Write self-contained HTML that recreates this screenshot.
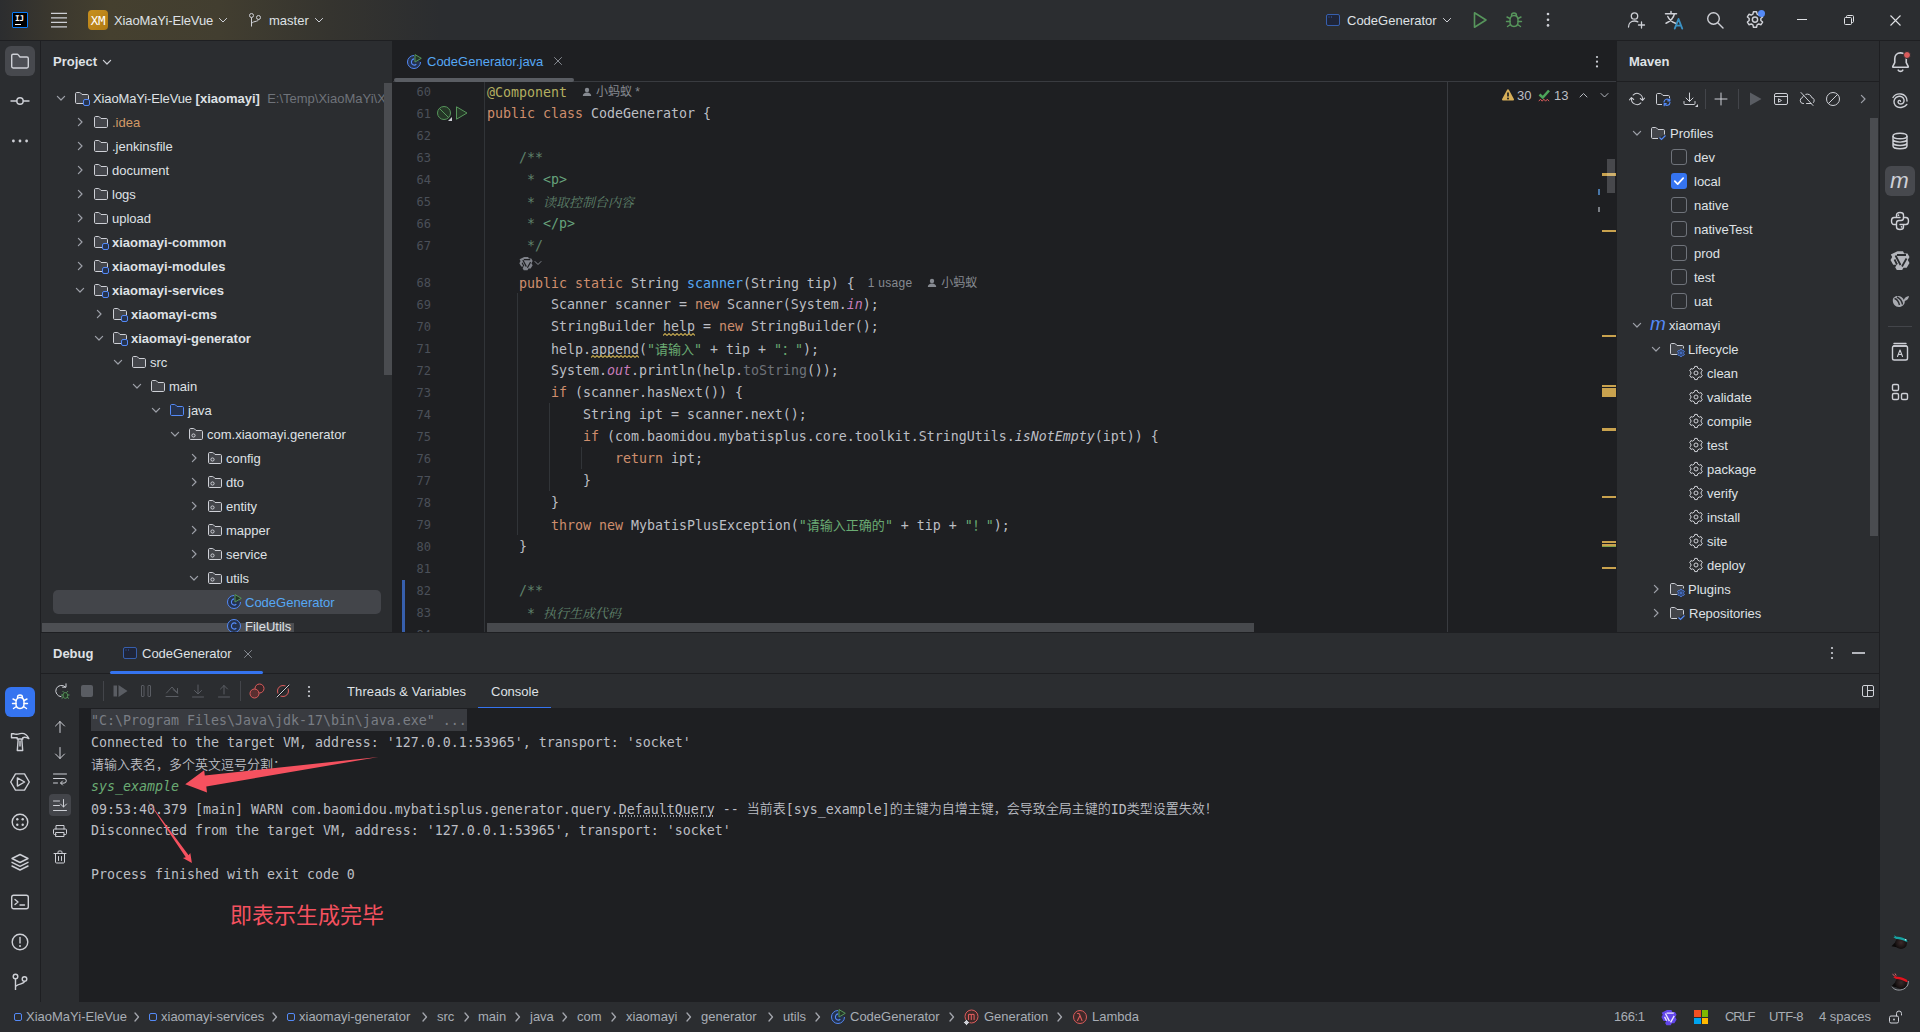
<!DOCTYPE html>
<html lang="zh"><head><meta charset="utf-8"><title>XiaoMaYi-EleVue – CodeGenerator.java</title>
<style>
*{box-sizing:border-box;margin:0;padding:0}
html,body{width:1920px;height:1032px;overflow:hidden;background:#2B2D30}
body{font-family:"Liberation Sans","Noto Sans CJK SC",sans-serif;font-size:13px;color:#DFE1E5;position:relative;-webkit-font-smoothing:antialiased}
.abs{position:absolute}
.t{position:absolute;white-space:pre;line-height:20px;height:20px;padding-top:1px}
.b{font-weight:700}
svg{display:block;position:absolute}
.ic{position:absolute;width:16px;height:16px}
.ic svg{position:absolute;left:0;top:0}
#title{position:absolute;left:0;top:0;width:1920px;height:40px;background:linear-gradient(90deg,#2C2D2F 0px,#3A372E 50px,#45402F 110px,#423E30 220px,#35342F 330px,#2B2D30 440px)}
#lstripe{position:absolute;left:0;top:41px;width:40px;height:961px;background:#2B2D30}
#rstripe{position:absolute;left:1880px;top:41px;width:40px;height:961px;background:#2B2D30}
#project{position:absolute;left:41px;top:41px;width:352px;height:591px;background:#2B2D30;overflow:hidden}
#editor{position:absolute;left:393px;top:40px;width:1223px;height:592px;background:#1E1F22;overflow:hidden}
#maven{position:absolute;left:1617px;top:41px;width:262px;height:591px;background:#2B2D30;overflow:hidden}
#debug{position:absolute;left:41px;top:633px;width:1838px;height:369px;background:#2B2D30;overflow:hidden}
#status{position:absolute;left:0;top:1002px;width:1920px;height:30px;background:#2B2D30;color:#A8ADB5}
.line{position:absolute;background:#1E1F22}
.row{position:absolute;left:0;height:24px;width:100%}
.row .t{top:2px}
.code{position:absolute;font-family:"DejaVu Sans Mono","Liberation Mono","Noto Sans CJK SC",monospace;font-size:13.29px;line-height:22px;height:22px;padding-top:1px;white-space:pre;color:#BCBEC4;letter-spacing:0}
.ln{position:absolute;font-family:"DejaVu Sans Mono","Liberation Mono","Noto Sans CJK SC",monospace;font-size:12px;line-height:22px;height:22px;color:#4B5059;text-align:right;width:40px;padding-top:1px}
.k{color:#CF8E6D}.s{color:#6AAB73}.an{color:#B3AE60}.m{color:#56A8F5}.f{color:#C77DBB;font-style:italic}.i{font-style:italic}
.d{color:#5F826B}.dt{color:#67A37C}.g{color:#6F737A}
.cj{font-family:"Noto Sans CJK SC",sans-serif;font-size:13px}
.cc{font-family:"Noto Sans CJK SC",sans-serif;font-size:13px;font-weight:350;position:relative;top:-1px}
.cji{font-family:"Noto Serif CJK SC",serif;font-size:13px;font-style:italic}
.hint{font-family:"Liberation Sans","Noto Sans CJK SC",sans-serif;font-size:12px;color:#868A91;position:relative;top:-1px}
.wav{}
.con{position:absolute;font-family:"DejaVu Sans Mono","Liberation Mono","Noto Sans CJK SC",monospace;font-size:13.29px;line-height:22px;height:22px;white-space:pre;color:#BCBEC4;padding-top:1px}
.sb{position:absolute;top:5px;line-height:20px;white-space:pre;color:#A8ADB5}
</style></head><body>
<div id="title"><div class="abs" style="left:12px;top:12px;width:16px;height:16px;background:#000;border:1.500px solid #087CFA;border-radius:1px"></div><div class="t b" style="left:15px;top:13.500px;padding:0;font-size:7.800px;line-height:9px;height:9px;color:#fff;font-family:'DejaVu Sans Mono','Liberation Mono','Noto Sans CJK SC',monospace;letter-spacing:-.4px">IJ</div><div class="abs" style="left:15px;top:24px;width:6px;height:1px;background:#fff"></div><svg width="18" height="16" viewBox="0 0 18 16" fill="none" style="left:50px;top:12px"><path d="M1 1.300h16M1 5.850h16M1 10.400h16M1 14.950h16" stroke="#CED0D6" stroke-width="1.300"/></svg><div class="abs" style="left:88px;top:10px;width:20px;height:20px;border-radius:4px;background:linear-gradient(135deg,#C8901F,#B07A14)"></div><div class="t" style="left:88px;top:10px;width:20px;text-align:center;font-size:12.500px;color:#fff;font-family:'DejaVu Sans Mono','Liberation Mono','Noto Sans CJK SC',monospace;letter-spacing:-.2px">XM</div><div class="t" style="left:114px;top:10px;letter-spacing:-.12px">XiaoMaYi-EleVue</div><svg width="16" height="16" viewBox="0 0 16 16" fill="none" style="left:215px;top:12px"><path d="M4.400 6.400l3.600 3.600 3.600-3.600" stroke="#CED0D6" stroke-linecap="round" stroke-linejoin="round"/></svg><svg width="16" height="16" viewBox="0 0 16 16" fill="none" style="left:247px;top:12px"><circle cx="4.500" cy="3.500" r="2" stroke="#CED0D6"/><circle cx="11.500" cy="5.500" r="2" stroke="#CED0D6"/><path d="M4.500 5.500v9M11.500 7.500c0 2.500-7 1.500-7 4.500" stroke="#CED0D6"/></svg><div class="t" style="left:269px;top:10px">master</div><svg width="16" height="16" viewBox="0 0 16 16" fill="none" style="left:311px;top:12px"><path d="M4.400 6.400l3.600 3.600 3.600-3.600" stroke="#CED0D6" stroke-linecap="round" stroke-linejoin="round"/></svg><div class="ic" style="left:1325px;top:12px"><svg width="16" height="16" viewBox="0 0 16 16" fill="none" style=""><rect x="1.500" y="2.500" width="13" height="11" rx="1.500" stroke="#375FAD" fill="#1F2538"/><path d="M3.500 5h1M6 5h1" stroke="#375FAD"/></svg></div><div class="t" style="left:1347px;top:10px">CodeGenerator</div><svg width="16" height="16" viewBox="0 0 16 16" fill="none" style="left:1439px;top:12px"><path d="M4.400 6.400l3.600 3.600 3.600-3.600" stroke="#CED0D6" stroke-linecap="round" stroke-linejoin="round"/></svg><svg width="20" height="20" viewBox="0 0 20 20" fill="none" style="left:1470px;top:10px"><path d="M4.500 2.800v14.400l11.500-7.200z" stroke="#57965C" stroke-width="1.600" stroke-linejoin="round"/></svg><svg width="20" height="20" viewBox="0 0 20 20" fill="none" style="left:1504px;top:10px"><path d="M10 5.500c2.500 0 4 2 4 4.500v2c0 2.500-1.500 4.500-4 4.500s-4-2-4-4.500v-2c0-2.500 1.500-4.500 4-4.500z" stroke="#57965C" stroke-width="1.400"/><path d="M7.500 5.500c0-1.500 1-2.500 2.500-2.500s2.500 1 2.500 2.500M6 8.500l-3-1.500M14 8.500l3-1.500M6 11.500H2.500M14 11.500h3.500M6.500 14.500l-3 2M13.500 14.500l3 2" stroke="#57965C" stroke-width="1.400" stroke-linecap="round"/></svg><svg width="4" height="15.4" viewBox="0 0 4 15.4" fill="none" style="left:1546px;top:12.3px"><circle cx="2" cy="2.0" r="1.3" fill="#CED0D6"/><circle cx="2" cy="7.7" r="1.3" fill="#CED0D6"/><circle cx="2" cy="13.4" r="1.3" fill="#CED0D6"/></svg><svg width="20" height="20" viewBox="0 0 20 20" fill="none" style="left:1626px;top:10px"><circle cx="8.500" cy="6" r="3.200" stroke="#CED0D6" stroke-width="1.300"/><path d="M2.500 17c0-3.500 2.500-6 6-6 1.300 0 2.400.3 3.300.9M15.500 12v6M12.500 15h6" stroke="#CED0D6" stroke-width="1.300" stroke-linecap="round"/></svg><svg width="20" height="20" viewBox="0 0 20 20" fill="none" style="left:1664px;top:10px"><path d="M1.500 3.800h11M7 1.500v2.300M10.500 3.800c-1 4-4 7.500-8.500 9.500M3.800 6.500c1.200 2.800 4 5.500 7.700 6.800" stroke="#CED0D6" stroke-width="1.500" stroke-linecap="round"/><path d="M10.800 18.500l3.700-9.500 3.700 9.500M12 15.600h5" stroke="#3B92C4" stroke-width="1.900" stroke-linecap="round" stroke-linejoin="round"/></svg><svg width="20" height="20" viewBox="0 0 20 20" fill="none" style="left:1705px;top:10px"><circle cx="8.500" cy="8.500" r="5.800" stroke="#CED0D6" stroke-width="1.400"/><path d="M13 13l5 5" stroke="#CED0D6" stroke-width="1.400" stroke-linecap="round"/></svg><svg width="22" height="22" viewBox="0 0 20 20" fill="none" style="left:1744px;top:9px"><path d="M8.600 2.500h2.800l.5 2.100 1.500.9 2.100-.7 1.400 2.400-1.600 1.500v1.700l1.600 1.500-1.400 2.400-2.100-.7-1.500.9-.5 2.100H8.600l-.5-2.100-1.500-.9-2.100.7-1.400-2.400 1.600-1.500V8.700L3.100 7.200l1.400-2.400 2.100.7 1.500-.9z" stroke="#CED0D6" stroke-width="1.300" stroke-linejoin="round"/><circle cx="10" cy="9.600" r="2.400" stroke="#CED0D6" stroke-width="1.300"/></svg><div class="abs" style="left:1758px;top:10px;width:7px;height:7px;border-radius:50%;background:#548AF7"></div><div class="abs" style="left:1797px;top:19px;width:10px;height:1px;background:#DFE1E5"></div><svg width="10" height="10" viewBox="0 0 10 10" fill="none" style="left:1844px;top:15px"><rect x=".5" y="2.500" width="7" height="7" rx="1" stroke="#DFE1E5"/><path d="M2.500 2.500v-1c0-.6.4-1 1-1h5c.6 0 1 .4 1 1v5c0 .6-.4 1-1 1h-1" stroke="#DFE1E5"/></svg><svg width="11" height="11" viewBox="0 0 11 11" fill="none" style="left:1890px;top:15px"><path d="M.5.500l10 10M10.500.500l-10 10" stroke="#DFE1E5" stroke-width="1.100"/></svg></div><div class="line" style="left:0;top:40px;width:1920px;height:1px"></div><div class="line" style="left:40px;top:41px;width:1px;height:961px"></div><div id="lstripe"><div class="abs" style="left:5px;top:5px;width:30px;height:30px;border-radius:6px;background:#47494E"></div><svg width="20" height="20" viewBox="0 0 20 20" fill="none" style="left:10px;top:10px"><path d="M1.700 4.600c0-.8.600-1.400 1.400-1.400h4c.4 0 .8.200 1 .5l1.900 2.300h6.900c.8 0 1.400.6 1.400 1.400v8.200c0 .8-.6 1.400-1.400 1.400H3.100c-.8 0-1.400-.6-1.400-1.400z" stroke="#CED0D6" stroke-width="1.400" fill="#5A5D63" fill-opacity=".35"/></svg><svg width="20" height="20" viewBox="0 0 20 20" fill="none" style="left:10px;top:50px"><circle cx="10" cy="10" r="3.200" stroke="#CED0D6" stroke-width="1.400"/><path d="M1 10h5.800M13.200 10H19" stroke="#CED0D6" stroke-width="1.400" stroke-linecap="round"/></svg><svg width="20" height="4" viewBox="0 0 20 4" fill="none" style="left:10px;top:98px"><circle cx="3.4" cy="2" r="1.400" fill="#CED0D6"/><circle cx="10.0" cy="2" r="1.400" fill="#CED0D6"/><circle cx="16.599999999999998" cy="2" r="1.400" fill="#CED0D6"/></svg><div class="abs" style="left:5px;top:646px;width:30px;height:30px;border-radius:6px;background:#3574F0"></div><svg width="20" height="20" viewBox="0 0 20 20" fill="none" style="left:10px;top:651px"><path d="M10 5.500c2.500 0 4 2 4 4.500v2c0 2.500-1.500 4.500-4 4.500s-4-2-4-4.500v-2c0-2.500 1.500-4.500 4-4.500z" stroke="#fff" stroke-width="1.400"/><path d="M7.500 5.500c0-1.500 1-2.500 2.500-2.500s2.500 1 2.500 2.500M6 8.500l-3-1.500M14 8.500l3-1.500M6 11.500H2.500M14 11.500h3.500M6.500 14.500l-3 2M13.500 14.500l3 2" stroke="#fff" stroke-width="1.400" stroke-linecap="round"/></svg><svg width="20" height="20" viewBox="0 0 20 20" fill="none" style="left:10px;top:691px"><path d="M1.500 1.800H4c2 .8 4 .4 6-.2 3.500-.8 7 .9 8.800 5-2.300-1.400-4.300-1.800-6-1V7H7.200V5.800H1.500z" stroke="#CED0D6" stroke-width="1.400" stroke-linejoin="round"/><path d="M8.200 7L7.300 18.500h5.400L11.800 7M10 8.500v6" stroke="#CED0D6" stroke-width="1.400" stroke-linejoin="round"/></svg><svg width="20" height="20" viewBox="0 0 20 20" fill="none" style="left:10px;top:731px"><path d="M5.500 1.900h9l4.800 8.100-4.800 8.100h-9L.7 10z" stroke="#CED0D6" stroke-width="1.400" stroke-linejoin="round"/><path d="M7.400 5.900v8.200l7.200-4.100z" stroke="#CED0D6" stroke-width="1.400" stroke-linejoin="round"/></svg><svg width="20" height="20" viewBox="0 0 20 20" fill="none" style="left:10px;top:771px"><circle cx="10" cy="10" r="7.800" stroke="#CED0D6" stroke-width="1.400"/><circle cx="7.3" cy="7.3" r="1.200" fill="#CED0D6"/><circle cx="12.7" cy="7.3" r="1.200" fill="#CED0D6"/><circle cx="7.3" cy="12.7" r="1.200" fill="#CED0D6"/><circle cx="12.7" cy="12.7" r="1.200" fill="#CED0D6"/></svg><svg width="20" height="20" viewBox="0 0 20 20" fill="none" style="left:10px;top:811px"><path d="M10 2.500l8 4-8 4-8-4z" stroke="#CED0D6" stroke-width="1.400" stroke-linejoin="round"/><path d="M2 10.300l8 4 8-4M2 14l8 4 8-4" stroke="#CED0D6" stroke-width="1.400" stroke-linejoin="round" stroke-linecap="round"/></svg><svg width="20" height="20" viewBox="0 0 20 20" fill="none" style="left:10px;top:851px"><rect x="1.700" y="3.200" width="16.600" height="13.600" rx="2" stroke="#CED0D6" stroke-width="1.400"/><path d="M5 7.500l3 2.500-3 2.500M10 13h4.500" stroke="#CED0D6" stroke-width="1.400" stroke-linecap="round" stroke-linejoin="round"/></svg><svg width="20" height="20" viewBox="0 0 20 20" fill="none" style="left:10px;top:891px"><circle cx="10" cy="10" r="7.800" stroke="#CED0D6" stroke-width="1.400"/><path d="M10 5.500v5.500" stroke="#CED0D6" stroke-width="1.400" stroke-linecap="round"/><circle cx="10" cy="14" r="1" fill="#CED0D6"/></svg><svg width="20" height="20" viewBox="0 0 20 20" fill="none" style="left:10px;top:931px"><circle cx="5.500" cy="4.500" r="2.300" stroke="#CED0D6" stroke-width="1.400"/><circle cx="14.500" cy="7" r="2.300" stroke="#CED0D6" stroke-width="1.400"/><path d="M5.500 6.800V18M14.500 9.300c0 3.500-9 2-9 6" stroke="#CED0D6" stroke-width="1.400"/></svg></div><div id="project"><div class="t b" style="left:12px;top:10px">Project</div><div class="ic" style="left:58px;top:13px"><svg width="16" height="16" viewBox="0 0 16 16" fill="none" style=""><path d="M4.400 6.400l3.600 3.600 3.600-3.600" stroke="#CED0D6" stroke-width="1.200" stroke-linecap="round" stroke-linejoin="round"/></svg></div><div class="abs" style="left:1px;top:582px;width:252px;height:9px;background:#4D4F53"></div><div class="abs" style="left:12px;top:549px;width:328px;height:24px;border-radius:5px;background:#43454A"></div><div class="row" style="top:45px"><div class="ic" style="left:12px;top:4px"><svg width="16" height="16" viewBox="0 0 16 16" fill="none" style=""><path d="M4.400 6.400l3.600 3.600 3.600-3.600" stroke="#9DA0A8" stroke-width="1.200" stroke-linecap="round" stroke-linejoin="round"/></svg></div><div class="ic" style="left:33px;top:4px"><svg width="16" height="16" viewBox="0 0 16 16" fill="none" style=""><path d="M9 13.5H2.6c-.6 0-1.1-.5-1.1-1.1V3.6c0-.6.5-1.1 1.1-1.1h3.1c.3 0 .6.1.8.4L8 4.5h5.4c.6 0 1.1.5 1.1 1.1V9" stroke="#CED0D6" fill="#43454A"/><rect x="9.5" y="9.500" width="6" height="6" rx="1.5" stroke="#548AF7" fill="#25324D"/></svg></div><div class="t" style="left:52px;color:#DFE1E5"><span style="letter-spacing:-.13px">XiaoMaYi-EleVue</span> <span class="b">[xiaomayi]</span><span style="color:#6F737A">  E:\Temp\XiaoMaYi\XiaoMaYi-EleVue</span></div></div><div class="row" style="top:69px"><div class="ic" style="left:31px;top:4px"><svg width="16" height="16" viewBox="0 0 16 16" fill="none" style=""><path d="M6.400 4.400l3.600 3.600-3.600 3.600" stroke="#9DA0A8" stroke-width="1.200" stroke-linecap="round" stroke-linejoin="round"/></svg></div><div class="ic" style="left:52px;top:4px"><svg width="16" height="16" viewBox="0 0 16 16" fill="none" style=""><path d="M1.5 3.6c0-.6.5-1.1 1.1-1.1h3.1c.3 0 .6.1.8.4L8 4.5h5.4c.6 0 1.1.5 1.1 1.1v6.8c0 .6-.5 1.1-1.1 1.1H2.6c-.6 0-1.1-.5-1.1-1.1z" stroke="#CED0D6" fill="#43454A"/></svg></div><div class="t" style="left:71px;color:#D19A66">.idea</div></div><div class="row" style="top:93px"><div class="ic" style="left:31px;top:4px"><svg width="16" height="16" viewBox="0 0 16 16" fill="none" style=""><path d="M6.400 4.400l3.600 3.600-3.600 3.600" stroke="#9DA0A8" stroke-width="1.200" stroke-linecap="round" stroke-linejoin="round"/></svg></div><div class="ic" style="left:52px;top:4px"><svg width="16" height="16" viewBox="0 0 16 16" fill="none" style=""><path d="M1.5 3.6c0-.6.5-1.1 1.1-1.1h3.1c.3 0 .6.1.8.4L8 4.5h5.4c.6 0 1.1.5 1.1 1.1v6.8c0 .6-.5 1.1-1.1 1.1H2.6c-.6 0-1.1-.5-1.1-1.1z" stroke="#CED0D6" fill="#43454A"/></svg></div><div class="t" style="left:71px;color:#DFE1E5">.jenkinsfile</div></div><div class="row" style="top:117px"><div class="ic" style="left:31px;top:4px"><svg width="16" height="16" viewBox="0 0 16 16" fill="none" style=""><path d="M6.400 4.400l3.600 3.600-3.600 3.600" stroke="#9DA0A8" stroke-width="1.200" stroke-linecap="round" stroke-linejoin="round"/></svg></div><div class="ic" style="left:52px;top:4px"><svg width="16" height="16" viewBox="0 0 16 16" fill="none" style=""><path d="M1.5 3.6c0-.6.5-1.1 1.1-1.1h3.1c.3 0 .6.1.8.4L8 4.5h5.4c.6 0 1.1.5 1.1 1.1v6.8c0 .6-.5 1.1-1.1 1.1H2.6c-.6 0-1.1-.5-1.1-1.1z" stroke="#CED0D6" fill="#43454A"/></svg></div><div class="t" style="left:71px;color:#DFE1E5">document</div></div><div class="row" style="top:141px"><div class="ic" style="left:31px;top:4px"><svg width="16" height="16" viewBox="0 0 16 16" fill="none" style=""><path d="M6.400 4.400l3.600 3.600-3.600 3.600" stroke="#9DA0A8" stroke-width="1.200" stroke-linecap="round" stroke-linejoin="round"/></svg></div><div class="ic" style="left:52px;top:4px"><svg width="16" height="16" viewBox="0 0 16 16" fill="none" style=""><path d="M1.5 3.6c0-.6.5-1.1 1.1-1.1h3.1c.3 0 .6.1.8.4L8 4.5h5.4c.6 0 1.1.5 1.1 1.1v6.8c0 .6-.5 1.1-1.1 1.1H2.6c-.6 0-1.1-.5-1.1-1.1z" stroke="#CED0D6" fill="#43454A"/></svg></div><div class="t" style="left:71px;color:#DFE1E5">logs</div></div><div class="row" style="top:165px"><div class="ic" style="left:31px;top:4px"><svg width="16" height="16" viewBox="0 0 16 16" fill="none" style=""><path d="M6.400 4.400l3.600 3.600-3.600 3.600" stroke="#9DA0A8" stroke-width="1.200" stroke-linecap="round" stroke-linejoin="round"/></svg></div><div class="ic" style="left:52px;top:4px"><svg width="16" height="16" viewBox="0 0 16 16" fill="none" style=""><path d="M1.5 3.6c0-.6.5-1.1 1.1-1.1h3.1c.3 0 .6.1.8.4L8 4.5h5.4c.6 0 1.1.5 1.1 1.1v6.8c0 .6-.5 1.1-1.1 1.1H2.6c-.6 0-1.1-.5-1.1-1.1z" stroke="#CED0D6" fill="#43454A"/></svg></div><div class="t" style="left:71px;color:#DFE1E5">upload</div></div><div class="row" style="top:189px"><div class="ic" style="left:31px;top:4px"><svg width="16" height="16" viewBox="0 0 16 16" fill="none" style=""><path d="M6.400 4.400l3.600 3.600-3.600 3.600" stroke="#9DA0A8" stroke-width="1.200" stroke-linecap="round" stroke-linejoin="round"/></svg></div><div class="ic" style="left:52px;top:4px"><svg width="16" height="16" viewBox="0 0 16 16" fill="none" style=""><path d="M9 13.5H2.6c-.6 0-1.1-.5-1.1-1.1V3.6c0-.6.5-1.1 1.1-1.1h3.1c.3 0 .6.1.8.4L8 4.5h5.4c.6 0 1.1.5 1.1 1.1V9" stroke="#CED0D6" fill="#43454A"/><rect x="9.5" y="9.500" width="6" height="6" rx="1.5" stroke="#548AF7" fill="#25324D"/></svg></div><div class="t b" style="left:71px;color:#DFE1E5">xiaomayi-common</div></div><div class="row" style="top:213px"><div class="ic" style="left:31px;top:4px"><svg width="16" height="16" viewBox="0 0 16 16" fill="none" style=""><path d="M6.400 4.400l3.600 3.600-3.600 3.600" stroke="#9DA0A8" stroke-width="1.200" stroke-linecap="round" stroke-linejoin="round"/></svg></div><div class="ic" style="left:52px;top:4px"><svg width="16" height="16" viewBox="0 0 16 16" fill="none" style=""><path d="M9 13.5H2.6c-.6 0-1.1-.5-1.1-1.1V3.6c0-.6.5-1.1 1.1-1.1h3.1c.3 0 .6.1.8.4L8 4.5h5.4c.6 0 1.1.5 1.1 1.1V9" stroke="#CED0D6" fill="#43454A"/><rect x="9.5" y="9.500" width="6" height="6" rx="1.5" stroke="#548AF7" fill="#25324D"/></svg></div><div class="t b" style="left:71px;color:#DFE1E5">xiaomayi-modules</div></div><div class="row" style="top:237px"><div class="ic" style="left:31px;top:4px"><svg width="16" height="16" viewBox="0 0 16 16" fill="none" style=""><path d="M4.400 6.400l3.600 3.600 3.600-3.600" stroke="#9DA0A8" stroke-width="1.200" stroke-linecap="round" stroke-linejoin="round"/></svg></div><div class="ic" style="left:52px;top:4px"><svg width="16" height="16" viewBox="0 0 16 16" fill="none" style=""><path d="M9 13.5H2.6c-.6 0-1.1-.5-1.1-1.1V3.6c0-.6.5-1.1 1.1-1.1h3.1c.3 0 .6.1.8.4L8 4.5h5.4c.6 0 1.1.5 1.1 1.1V9" stroke="#CED0D6" fill="#43454A"/><rect x="9.5" y="9.500" width="6" height="6" rx="1.5" stroke="#548AF7" fill="#25324D"/></svg></div><div class="t b" style="left:71px;color:#DFE1E5">xiaomayi-services</div></div><div class="row" style="top:261px"><div class="ic" style="left:50px;top:4px"><svg width="16" height="16" viewBox="0 0 16 16" fill="none" style=""><path d="M6.400 4.400l3.600 3.600-3.600 3.600" stroke="#9DA0A8" stroke-width="1.200" stroke-linecap="round" stroke-linejoin="round"/></svg></div><div class="ic" style="left:71px;top:4px"><svg width="16" height="16" viewBox="0 0 16 16" fill="none" style=""><path d="M9 13.5H2.6c-.6 0-1.1-.5-1.1-1.1V3.6c0-.6.5-1.1 1.1-1.1h3.1c.3 0 .6.1.8.4L8 4.5h5.4c.6 0 1.1.5 1.1 1.1V9" stroke="#CED0D6" fill="#43454A"/><rect x="9.5" y="9.500" width="6" height="6" rx="1.5" stroke="#548AF7" fill="#25324D"/></svg></div><div class="t b" style="left:90px;color:#DFE1E5">xiaomayi-cms</div></div><div class="row" style="top:285px"><div class="ic" style="left:50px;top:4px"><svg width="16" height="16" viewBox="0 0 16 16" fill="none" style=""><path d="M4.400 6.400l3.600 3.600 3.600-3.600" stroke="#9DA0A8" stroke-width="1.200" stroke-linecap="round" stroke-linejoin="round"/></svg></div><div class="ic" style="left:71px;top:4px"><svg width="16" height="16" viewBox="0 0 16 16" fill="none" style=""><path d="M9 13.5H2.6c-.6 0-1.1-.5-1.1-1.1V3.6c0-.6.5-1.1 1.1-1.1h3.1c.3 0 .6.1.8.4L8 4.5h5.4c.6 0 1.1.5 1.1 1.1V9" stroke="#CED0D6" fill="#43454A"/><rect x="9.5" y="9.500" width="6" height="6" rx="1.5" stroke="#548AF7" fill="#25324D"/></svg></div><div class="t b" style="left:90px;color:#DFE1E5">xiaomayi-generator</div></div><div class="row" style="top:309px"><div class="ic" style="left:69px;top:4px"><svg width="16" height="16" viewBox="0 0 16 16" fill="none" style=""><path d="M4.400 6.400l3.600 3.600 3.600-3.600" stroke="#9DA0A8" stroke-width="1.200" stroke-linecap="round" stroke-linejoin="round"/></svg></div><div class="ic" style="left:90px;top:4px"><svg width="16" height="16" viewBox="0 0 16 16" fill="none" style=""><path d="M1.5 3.6c0-.6.5-1.1 1.1-1.1h3.1c.3 0 .6.1.8.4L8 4.5h5.4c.6 0 1.1.5 1.1 1.1v6.8c0 .6-.5 1.1-1.1 1.1H2.6c-.6 0-1.1-.5-1.1-1.1z" stroke="#CED0D6" fill="#43454A"/></svg></div><div class="t" style="left:109px;color:#DFE1E5">src</div></div><div class="row" style="top:333px"><div class="ic" style="left:88px;top:4px"><svg width="16" height="16" viewBox="0 0 16 16" fill="none" style=""><path d="M4.400 6.400l3.600 3.600 3.600-3.600" stroke="#9DA0A8" stroke-width="1.200" stroke-linecap="round" stroke-linejoin="round"/></svg></div><div class="ic" style="left:109px;top:4px"><svg width="16" height="16" viewBox="0 0 16 16" fill="none" style=""><path d="M1.5 3.6c0-.6.5-1.1 1.1-1.1h3.1c.3 0 .6.1.8.4L8 4.5h5.4c.6 0 1.1.5 1.1 1.1v6.8c0 .6-.5 1.1-1.1 1.1H2.6c-.6 0-1.1-.5-1.1-1.1z" stroke="#CED0D6" fill="#43454A"/></svg></div><div class="t" style="left:128px;color:#DFE1E5">main</div></div><div class="row" style="top:357px"><div class="ic" style="left:107px;top:4px"><svg width="16" height="16" viewBox="0 0 16 16" fill="none" style=""><path d="M4.400 6.400l3.600 3.600 3.600-3.600" stroke="#9DA0A8" stroke-width="1.200" stroke-linecap="round" stroke-linejoin="round"/></svg></div><div class="ic" style="left:128px;top:4px"><svg width="16" height="16" viewBox="0 0 16 16" fill="none" style=""><path d="M1.5 3.6c0-.6.5-1.1 1.1-1.1h3.1c.3 0 .6.1.8.4L8 4.5h5.4c.6 0 1.1.5 1.1 1.1v6.8c0 .6-.5 1.1-1.1 1.1H2.6c-.6 0-1.1-.5-1.1-1.1z" stroke="#548AF7" fill="#25324D"/></svg></div><div class="t" style="left:147px;color:#DFE1E5">java</div></div><div class="row" style="top:381px"><div class="ic" style="left:126px;top:4px"><svg width="16" height="16" viewBox="0 0 16 16" fill="none" style=""><path d="M4.400 6.400l3.600 3.600 3.600-3.600" stroke="#9DA0A8" stroke-width="1.200" stroke-linecap="round" stroke-linejoin="round"/></svg></div><div class="ic" style="left:147px;top:4px"><svg width="16" height="16" viewBox="0 0 16 16" fill="none" style=""><path d="M1.5 3.6c0-.6.5-1.1 1.1-1.1h3.1c.3 0 .6.1.8.4L8 4.5h5.4c.6 0 1.1.5 1.1 1.1v6.8c0 .6-.5 1.1-1.1 1.1H2.6c-.6 0-1.1-.5-1.1-1.1z" stroke="#CED0D6" fill="#43454A"/><circle cx="5.500" cy="9.500" r="1.600" stroke="#CED0D6"/></svg></div><div class="t" style="left:166px;color:#DFE1E5">com.xiaomayi.generator</div></div><div class="row" style="top:405px"><div class="ic" style="left:145px;top:4px"><svg width="16" height="16" viewBox="0 0 16 16" fill="none" style=""><path d="M6.400 4.400l3.600 3.600-3.600 3.600" stroke="#9DA0A8" stroke-width="1.200" stroke-linecap="round" stroke-linejoin="round"/></svg></div><div class="ic" style="left:166px;top:4px"><svg width="16" height="16" viewBox="0 0 16 16" fill="none" style=""><path d="M1.5 3.6c0-.6.5-1.1 1.1-1.1h3.1c.3 0 .6.1.8.4L8 4.5h5.4c.6 0 1.1.5 1.1 1.1v6.8c0 .6-.5 1.1-1.1 1.1H2.6c-.6 0-1.1-.5-1.1-1.1z" stroke="#CED0D6" fill="#43454A"/><circle cx="5.500" cy="9.500" r="1.600" stroke="#CED0D6"/></svg></div><div class="t" style="left:185px;color:#DFE1E5">config</div></div><div class="row" style="top:429px"><div class="ic" style="left:145px;top:4px"><svg width="16" height="16" viewBox="0 0 16 16" fill="none" style=""><path d="M6.400 4.400l3.600 3.600-3.600 3.600" stroke="#9DA0A8" stroke-width="1.200" stroke-linecap="round" stroke-linejoin="round"/></svg></div><div class="ic" style="left:166px;top:4px"><svg width="16" height="16" viewBox="0 0 16 16" fill="none" style=""><path d="M1.5 3.6c0-.6.5-1.1 1.1-1.1h3.1c.3 0 .6.1.8.4L8 4.5h5.4c.6 0 1.1.5 1.1 1.1v6.8c0 .6-.5 1.1-1.1 1.1H2.6c-.6 0-1.1-.5-1.1-1.1z" stroke="#CED0D6" fill="#43454A"/><circle cx="5.500" cy="9.500" r="1.600" stroke="#CED0D6"/></svg></div><div class="t" style="left:185px;color:#DFE1E5">dto</div></div><div class="row" style="top:453px"><div class="ic" style="left:145px;top:4px"><svg width="16" height="16" viewBox="0 0 16 16" fill="none" style=""><path d="M6.400 4.400l3.600 3.600-3.600 3.600" stroke="#9DA0A8" stroke-width="1.200" stroke-linecap="round" stroke-linejoin="round"/></svg></div><div class="ic" style="left:166px;top:4px"><svg width="16" height="16" viewBox="0 0 16 16" fill="none" style=""><path d="M1.5 3.6c0-.6.5-1.1 1.1-1.1h3.1c.3 0 .6.1.8.4L8 4.5h5.4c.6 0 1.1.5 1.1 1.1v6.8c0 .6-.5 1.1-1.1 1.1H2.6c-.6 0-1.1-.5-1.1-1.1z" stroke="#CED0D6" fill="#43454A"/><circle cx="5.500" cy="9.500" r="1.600" stroke="#CED0D6"/></svg></div><div class="t" style="left:185px;color:#DFE1E5">entity</div></div><div class="row" style="top:477px"><div class="ic" style="left:145px;top:4px"><svg width="16" height="16" viewBox="0 0 16 16" fill="none" style=""><path d="M6.400 4.400l3.600 3.600-3.600 3.600" stroke="#9DA0A8" stroke-width="1.200" stroke-linecap="round" stroke-linejoin="round"/></svg></div><div class="ic" style="left:166px;top:4px"><svg width="16" height="16" viewBox="0 0 16 16" fill="none" style=""><path d="M1.5 3.6c0-.6.5-1.1 1.1-1.1h3.1c.3 0 .6.1.8.4L8 4.5h5.4c.6 0 1.1.5 1.1 1.1v6.8c0 .6-.5 1.1-1.1 1.1H2.6c-.6 0-1.1-.5-1.1-1.1z" stroke="#CED0D6" fill="#43454A"/><circle cx="5.500" cy="9.500" r="1.600" stroke="#CED0D6"/></svg></div><div class="t" style="left:185px;color:#DFE1E5">mapper</div></div><div class="row" style="top:501px"><div class="ic" style="left:145px;top:4px"><svg width="16" height="16" viewBox="0 0 16 16" fill="none" style=""><path d="M6.400 4.400l3.600 3.600-3.600 3.600" stroke="#9DA0A8" stroke-width="1.200" stroke-linecap="round" stroke-linejoin="round"/></svg></div><div class="ic" style="left:166px;top:4px"><svg width="16" height="16" viewBox="0 0 16 16" fill="none" style=""><path d="M1.5 3.6c0-.6.5-1.1 1.1-1.1h3.1c.3 0 .6.1.8.4L8 4.5h5.4c.6 0 1.1.5 1.1 1.1v6.8c0 .6-.5 1.1-1.1 1.1H2.6c-.6 0-1.1-.5-1.1-1.1z" stroke="#CED0D6" fill="#43454A"/><circle cx="5.500" cy="9.500" r="1.600" stroke="#CED0D6"/></svg></div><div class="t" style="left:185px;color:#DFE1E5">service</div></div><div class="row" style="top:525px"><div class="ic" style="left:145px;top:4px"><svg width="16" height="16" viewBox="0 0 16 16" fill="none" style=""><path d="M4.400 6.400l3.600 3.600 3.600-3.600" stroke="#9DA0A8" stroke-width="1.200" stroke-linecap="round" stroke-linejoin="round"/></svg></div><div class="ic" style="left:166px;top:4px"><svg width="16" height="16" viewBox="0 0 16 16" fill="none" style=""><path d="M1.5 3.6c0-.6.5-1.1 1.1-1.1h3.1c.3 0 .6.1.8.4L8 4.5h5.4c.6 0 1.1.5 1.1 1.1v6.8c0 .6-.5 1.1-1.1 1.1H2.6c-.6 0-1.1-.5-1.1-1.1z" stroke="#CED0D6" fill="#43454A"/><circle cx="5.500" cy="9.500" r="1.600" stroke="#CED0D6"/></svg></div><div class="t" style="left:185px;color:#DFE1E5">utils</div></div><div class="row" style="top:549px"><div class="ic" style="left:185px;top:4px"><svg width="16" height="16" viewBox="0 0 16 16" fill="none" style=""><path d="M8 1.500A6.500 6.500 0 1 0 14.500 8" stroke="#548AF7" fill="#25324D"/><path d="M10.300 10.100c-.5.600-1.200 1-2.100 1-1.600 0-2.800-1.300-2.800-3.100s1.200-3.100 2.800-3.100" stroke="#548AF7" stroke-width="1.100"/><path d="M9 .600v7.400l6.300-3.700z" fill="#253627" stroke="#57965C" stroke-linejoin="round"/></svg></div><div class="t" style="left:204px;color:#56A8F5">CodeGenerator</div></div><div class="row" style="top:573px"><div class="ic" style="left:185px;top:4px"><svg width="16" height="16" viewBox="0 0 16 16" fill="none" style=""><circle cx="8" cy="8" r="6.5" stroke="#548AF7" fill="#25324D"/><path d="M10.300 10.1c-.5.600-1.200 1-2.100 1-1.600 0-2.800-1.300-2.800-3.100s1.200-3.100 2.800-3.100c.9 0 1.600.4 2.100 1" stroke="#548AF7" stroke-width="1.100"/></svg></div><div class="t" style="left:204px;color:#DFE1E5">FileUtils</div></div><div class="abs" style="left:343px;top:42px;width:8px;height:292px;background:#4A4C50"></div></div><div class="line" style="left:392px;top:41px;width:1px;height:591px"></div><div id="editor"><div class="ic" style="left:13px;top:14px"><svg width="16" height="16" viewBox="0 0 16 16" fill="none" style=""><path d="M8 1.500A6.500 6.500 0 1 0 14.500 8" stroke="#548AF7" fill="#25324D"/><path d="M10.300 10.100c-.5.600-1.200 1-2.100 1-1.600 0-2.800-1.300-2.800-3.100s1.200-3.100 2.800-3.100" stroke="#548AF7" stroke-width="1.100"/><path d="M9 .600v7.400l6.300-3.700z" fill="#253627" stroke="#57965C" stroke-linejoin="round"/></svg></div><div class="t" style="left:34px;top:11px;color:#56A8F5">CodeGenerator.java</div><svg width="8" height="8" viewBox="0 0 8 8" fill="none" style="left:161px;top:17px"><path d="M.5.500l7 7M7.500.500l-7 7" stroke="#868A91" stroke-linecap="round"/></svg><svg width="4" height="13.4" viewBox="0 0 4 13.4" fill="none" style="left:1202px;top:14.8px"><circle cx="2" cy="2.0" r="1.1" fill="#CED0D6"/><circle cx="2" cy="6.7" r="1.1" fill="#CED0D6"/><circle cx="2" cy="11.4" r="1.1" fill="#CED0D6"/></svg><div class="abs" style="left:0;top:41px;width:1223px;height:1px;background:#393B40"></div><div class="abs" style="left:1px;top:38px;width:180px;height:4px;border-radius:2px;background:#5A5D63"></div><div class="abs" style="left:91px;top:42px;width:1px;height:550px;background:#313438"></div><div class="abs" style="left:1054px;top:42px;width:1px;height:550px;background:#393B40"></div><div class="abs" style="left:9px;top:540px;width:3px;height:52px;background:#375FAD"></div><div class="ln" style="left:-2px;top:40px">60</div><div class="code" style="left:94px;top:40px"><span class="an">@Component</span><span class="hint" style="margin-left:15px"><svg width="10" height="10" viewBox="0 0 10 10" fill="none" style="position:relative;display:inline-block;vertical-align:-1px;margin-right:4px"><circle cx="5" cy="3" r="2.200" fill="#868A91"/><path d="M.8 9c0-2.200 1.800-3.600 4.200-3.600S9.200 6.800 9.200 9z" fill="#868A91"/></svg><span class="cj" style="font-size:12px">小蚂蚁</span> *</span></div><div class="ln" style="left:-2px;top:62px">61</div><div class="code" style="left:94px;top:62px"><span class="k">public class </span>CodeGenerator {</div><div class="ln" style="left:-2px;top:84px">62</div><div class="ln" style="left:-2px;top:106px">63</div><div class="code" style="left:94px;top:106px"><span class="d">    /**</span></div><div class="ln" style="left:-2px;top:128px">64</div><div class="code" style="left:94px;top:128px"><span class="d">     * </span><span class="dt">&lt;p&gt;</span></div><div class="ln" style="left:-2px;top:150px">65</div><div class="code" style="left:94px;top:150px"><span class="d">     * </span><span class="d cji">读取控制台内容</span></div><div class="ln" style="left:-2px;top:172px">66</div><div class="code" style="left:94px;top:172px"><span class="d">     * </span><span class="dt">&lt;/p&gt;</span></div><div class="ln" style="left:-2px;top:194px">67</div><div class="code" style="left:94px;top:194px"><span class="d">     */</span></div><div class="ln" style="left:-2px;top:231px">68</div><div class="code" style="left:94px;top:231px">    <span class="k">public static </span>String <span class="m">scanner</span>(String tip) {<span class="hint" style="margin-left:13px;letter-spacing:.25px">1 usage</span><span class="hint" style="margin-left:15px"><svg width="10" height="10" viewBox="0 0 10 10" fill="none" style="position:relative;display:inline-block;vertical-align:-1px;margin-right:4px"><circle cx="5" cy="3" r="2.200" fill="#868A91"/><path d="M.8 9c0-2.200 1.800-3.600 4.200-3.600S9.200 6.800 9.200 9z" fill="#868A91"/></svg><span class="cj" style="font-size:12px">小蚂蚁</span></span></div><div class="ln" style="left:-2px;top:253px">69</div><div class="code" style="left:94px;top:253px">        Scanner scanner = <span class="k">new </span>Scanner(System.<span class="f">in</span>);</div><div class="ln" style="left:-2px;top:275px">70</div><div class="code" style="left:94px;top:275px">        StringBuilder <span class="wav">help</span> = <span class="k">new </span>StringBuilder();</div><div class="ln" style="left:-2px;top:297px">71</div><div class="code" style="left:94px;top:297px">        help.<span class="wav">append</span>(<span class="s">"<span class="cj">请输入</span>"</span> + tip + <span class="s">"<span class="cj">：</span>"</span>);</div><div class="ln" style="left:-2px;top:319px">72</div><div class="code" style="left:94px;top:319px">        System.<span class="f">out</span>.println(help.<span class="g">toString</span>());</div><div class="ln" style="left:-2px;top:341px">73</div><div class="code" style="left:94px;top:341px">        <span class="k">if </span>(scanner.hasNext()) {</div><div class="ln" style="left:-2px;top:363px">74</div><div class="code" style="left:94px;top:363px">            String ipt = scanner.next();</div><div class="ln" style="left:-2px;top:385px">75</div><div class="code" style="left:94px;top:385px">            <span class="k">if </span>(com.baomidou.mybatisplus.core.toolkit.StringUtils.<span class="i">isNotEmpty</span>(ipt)) {</div><div class="ln" style="left:-2px;top:407px">76</div><div class="code" style="left:94px;top:407px">                <span class="k">return </span>ipt;</div><div class="ln" style="left:-2px;top:429px">77</div><div class="code" style="left:94px;top:429px">            }</div><div class="ln" style="left:-2px;top:451px">78</div><div class="code" style="left:94px;top:451px">        }</div><div class="ln" style="left:-2px;top:473px">79</div><div class="code" style="left:94px;top:473px">        <span class="k">throw new </span>MybatisPlusException(<span class="s">"<span class="cj">请输入正确的</span>"</span> + tip + <span class="s">"<span class="cj">！</span>"</span>);</div><div class="ln" style="left:-2px;top:495px">80</div><div class="code" style="left:94px;top:495px">    }</div><div class="ln" style="left:-2px;top:517px">81</div><div class="ln" style="left:-2px;top:539px">82</div><div class="code" style="left:94px;top:539px"><span class="d">    /**</span></div><div class="ln" style="left:-2px;top:561px">83</div><div class="code" style="left:94px;top:561px"><span class="d">     * </span><span class="d cji">执行生成代码</span></div><div class="ln" style="left:-2px;top:583px">84</div><div class="code" style="left:94px;top:583px"><span class="d">     *</span></div><div class="abs" style="left:124px;top:253px;width:1px;height:242px;background:#313438"></div><div class="abs" style="left:156px;top:363px;width:1px;height:88px;background:#313438"></div><div class="abs" style="left:188px;top:407px;width:1px;height:22px;background:#313438"></div><svg width="32" height="3" viewBox="0 0 32 3" fill="none" style="left:270px;top:293px"><polyline points="0,2.5 2,0.5 4,2.5 6,0.5 8,2.5 10,0.5 12,2.5 14,0.5 16,2.5 18,0.5 20,2.5 22,0.5 24,2.5 26,0.5 28,2.5 30,0.5 32,2.5" stroke="#BFA44E" stroke-width="1.100" fill="none"/></svg><svg width="48" height="3" viewBox="0 0 48 3" fill="none" style="left:198px;top:315px"><polyline points="0,2.5 2,0.5 4,2.5 6,0.5 8,2.5 10,0.5 12,2.5 14,0.5 16,2.5 18,0.5 20,2.5 22,0.5 24,2.5 26,0.5 28,2.5 30,0.5 32,2.5 34,0.5 36,2.5 38,0.5 40,2.5 42,0.5 44,2.5 46,0.5 48,2.5" stroke="#BFA44E" stroke-width="1.100" fill="none"/></svg><svg width="16" height="16" viewBox="0 0 16 16" fill="none" style="left:43px;top:65px"><circle cx="8" cy="8" r="6.500" stroke="#57965C" fill="#253627"/><path d="M3.400 3.400l9.200 9.200" stroke="#57965C"/><path d="M16 12v4h-4z" fill="#CED0D6"/></svg><svg width="16" height="16" viewBox="0 0 16 16" fill="none" style="left:61px;top:65px"><path d="M2.500 1.800v12.400l10.500-6.200z" stroke="#57965C" fill="#253627" stroke-linejoin="round"/></svg><svg width="14" height="15" viewBox="0 0 20 21" fill="none" style="left:126px;top:216px"><path d="M7.500 1.200h5.500l1.200 2.300h3.300l2 3.500-1.700 3 1.700 3-2.800 4.800h-3.200l-1.300 2.300H6.800l-1.600-2.800 1.500-2.500H3.200L.5 10l1.700-3L.8 4.500z" fill="#7F828A"/><path d="M5.500 5.500l5 9.500M7 5h9M16.500 8.500l-4.500 8M4.500 9.500l2.500 5" stroke="#1E1F22" stroke-width="1.700"/></svg><svg width="8" height="6" viewBox="0 0 8 6" fill="none" style="left:141px;top:220px"><path d="M1 1.500l3 3 3-3" stroke="#868A91" stroke-linecap="round" stroke-linejoin="round"/></svg><svg width="14" height="14" viewBox="0 0 14 14" fill="none" style="left:1108px;top:48px"><path d="M7 2.300L12 11.500H2z" fill="#D6AE58" stroke="#D6AE58" stroke-width="2" stroke-linejoin="round"/><path d="M7 4.600v3.800" stroke="#1E1F22" stroke-width="1.700"/><circle cx="7" cy="10.400" r="1" fill="#1E1F22"/></svg><div class="t" style="left:1124px;top:45px;color:#BCBEC4">30</div><svg width="14" height="15" viewBox="0 0 14 15" fill="none" style="left:1145px;top:48px"><path d="M1.500 6.500l3.300 3L11 2.500" stroke="#4DA55A" stroke-width="2.600" stroke-linejoin="miter"/><path d="M.8 13.200l1.700-2 1.700 2 1.700-2 1.700 2 1.700-2 1.700 2" stroke="#DB5C5C" stroke-width="1" stroke-linejoin="round"/></svg><div class="t" style="left:1161px;top:45px;color:#BCBEC4">13</div><svg width="9" height="7" viewBox="0 0 9 7" fill="none" style="left:1186px;top:52px"><path d="M1 5l3.500-3.500L8 5" stroke="#B4B8BF" stroke-width="1" stroke-linecap="round" stroke-linejoin="round"/></svg><svg width="9" height="7" viewBox="0 0 9 7" fill="none" style="left:1207px;top:52px"><path d="M1 1.500L4.500 5 8 1.500" stroke="#B4B8BF" stroke-width="1" stroke-linecap="round" stroke-linejoin="round"/></svg><div class="abs" style="left:1209px;top:190px;width:14px;height:2px;background:#C9A24E"></div><div class="abs" style="left:1209px;top:295px;width:14px;height:2px;background:#C9A24E"></div><div class="abs" style="left:1209px;top:456px;width:14px;height:2px;background:#C9A24E"></div><div class="abs" style="left:1209px;top:527px;width:14px;height:2px;background:#C9A24E"></div><div class="abs" style="left:1209px;top:133px;width:14px;height:3px;background:#C9A24E"></div><div class="abs" style="left:1209px;top:388px;width:14px;height:3px;background:#C9A24E"></div><div class="abs" style="left:1209px;top:345px;width:14px;height:2px;background:#C9A24E"></div><div class="abs" style="left:1209px;top:348px;width:14px;height:9px;background:#C9A24E"></div><div class="abs" style="left:1209px;top:501px;width:14px;height:2px;background:#C9A24E"></div><div class="abs" style="left:1209px;top:504px;width:14px;height:2px;background:#C9A24E"></div><div class="abs" style="left:1209px;top:506px;width:14px;height:1px;background:#7FA24A"></div><div class="abs" style="left:1205px;top:149px;width:2px;height:6px;background:#4876A8"></div><div class="abs" style="left:1205px;top:167px;width:2px;height:5px;background:#7A7E85"></div><div class="abs" style="left:1214px;top:119px;width:8px;height:34px;background:rgba(235,238,245,.2)"></div><div class="abs" style="left:94px;top:583px;width:767px;height:9px;background:#47494D"></div></div><div class="line" style="left:1616px;top:41px;width:1px;height:591px"></div><div id="maven"><div class="t b" style="left:12px;top:10px">Maven</div><div class="line" style="left:0;top:40px;width:262px;height:1px"></div><svg width="16" height="16" viewBox="0 0 16 16" fill="none" style="left:12px;top:50px"><g transform="rotate(40 8 8)"><path d="M13.500 8.500a5.500 5.500 0 0 1-10.300 2.200M2.500 7.500a5.500 5.500 0 0 1 10.300-2.200" stroke="#CED0D6" stroke-linecap="round"/><path d="M13.200 2.500v3h-3M2.800 13.500v-3h3" stroke="#CED0D6" stroke-linecap="round" stroke-linejoin="round"/></g></svg><svg width="16" height="16" viewBox="0 0 16 16" fill="none" style="left:38px;top:50px"><path d="M7 13.500H2.600c-.6 0-1.100-.5-1.100-1.100V3.600c0-.6.5-1.100 1.100-1.100h3.100c.3 0 .6.100.8.400L8 4.500h5.400c.6 0 1.100.5 1.100 1.100V7" stroke="#CED0D6"/><path d="M15 11.500a3 3 0 0 1-5.500 1.500M9 11a3 3 0 0 1 5.500-1.500" stroke="#548AF7" stroke-width="1.200" stroke-linecap="round"/><path d="M14.800 7.800v2h-2M9.200 14.700v-2h2" stroke="#548AF7" stroke-width="1.200" stroke-linecap="round" stroke-linejoin="round"/></svg><svg width="16" height="16" viewBox="0 0 16 16" fill="none" style="left:65px;top:50px"><path d="M7.500 2v8M4 7l3.500 3.500L11 7M2 10.500v2c0 .6.400 1 1 1h9c.6 0 1-.4 1-1v-2" stroke="#CED0D6" stroke-linecap="round" stroke-linejoin="round"/><path d="M16 13v3h-3z" fill="#CED0D6"/></svg><div class="abs" style="left:88px;top:48px;width:1px;height:20px;background:#43454A"></div><svg width="16" height="16" viewBox="0 0 16 16" fill="none" style="left:96px;top:50px"><path d="M8 2v12M2 8h12" stroke="#CED0D6" stroke-linecap="round"/></svg><div class="abs" style="left:121px;top:48px;width:1px;height:20px;background:#43454A"></div><svg width="16" height="16" viewBox="0 0 16 16" fill="none" style="left:130px;top:50px"><path d="M3 1.500v13l11.500-6.500z" fill="#5A5D63"/></svg><svg width="16" height="16" viewBox="0 0 16 16" fill="none" style="left:156px;top:50px"><rect x="1.500" y="2.500" width="13" height="11" rx="1.500" stroke="#CED0D6"/><path d="M1.500 5.500h13M5.500 7.800v3.400l3-1.700z" stroke="#CED0D6" stroke-linejoin="round"/></svg><svg width="16" height="16" viewBox="0 0 16 16" fill="none" style="left:182px;top:50px"><path d="M4.500 12.500H4a3 3 0 0 1-.5-5.900 4.500 4.500 0 0 1 1.300-2.300M6.800 3.300a4.500 4.500 0 0 1 5.900 3.300 3 3 0 0 1 1.800 4.900M12 12.500H7.500M2 1.500l12 13" stroke="#CED0D6" stroke-linecap="round"/></svg><svg width="16" height="16" viewBox="0 0 16 16" fill="none" style="left:208px;top:50px"><circle cx="8" cy="8" r="6.500" stroke="#CED0D6"/><path d="M12.600 3.400l-9.200 9.200" stroke="#CED0D6"/></svg><div class="ic" style="left:238px;top:50px"><svg width="16" height="16" viewBox="0 0 16 16" fill="none" style=""><path d="M6.400 4.400l3.600 3.600-3.600 3.600" stroke="#9DA0A8" stroke-width="1.200" stroke-linecap="round" stroke-linejoin="round"/></svg></div><div class="row" style="top:80px"><div class="ic" style="left:12px;top:4px"><svg width="16" height="16" viewBox="0 0 16 16" fill="none" style=""><path d="M4.400 6.400l3.600 3.600 3.600-3.600" stroke="#9DA0A8" stroke-width="1.200" stroke-linecap="round" stroke-linejoin="round"/></svg></div><div class="ic" style="left:33px;top:4px"><svg width="16" height="16" viewBox="0 0 16 16" fill="none" style=""><path d="M8 13.500H2.600c-.6 0-1.100-.5-1.100-1.100V3.600c0-.6.5-1.100 1.100-1.100h3.100c.3 0 .6.100.8.400L8 4.500h5.400c.6 0 1.100.5 1.100 1.100V9.500" stroke="#CED0D6" fill="#43454A"/><path d="M9.500 12.500l2 2 4-4" stroke="#548AF7" stroke-width="1.200"/></svg></div><div class="t" style="left:53px">Profiles</div></div><div class="row" style="top:104px"><div class="ic" style="left:54px;top:4px"><svg width="16" height="16" viewBox="0 0 16 16" fill="none" style=""><rect x=".5" y=".5" width="15" height="15" rx="2.500" stroke="#6F737A"/></svg></div><div class="t" style="left:77px">dev</div></div><div class="row" style="top:128px"><div class="ic" style="left:54px;top:4px"><svg width="16" height="16" viewBox="0 0 16 16" fill="none" style=""><rect x="0" y="0" width="16" height="16" rx="3" fill="#3574F0"/><path d="M3.800 8.200l2.900 2.900 5.500-6" stroke="#fff" stroke-width="1.700" stroke-linecap="round" stroke-linejoin="round"/></svg></div><div class="t" style="left:77px">local</div></div><div class="row" style="top:152px"><div class="ic" style="left:54px;top:4px"><svg width="16" height="16" viewBox="0 0 16 16" fill="none" style=""><rect x=".5" y=".5" width="15" height="15" rx="2.500" stroke="#6F737A"/></svg></div><div class="t" style="left:77px">native</div></div><div class="row" style="top:176px"><div class="ic" style="left:54px;top:4px"><svg width="16" height="16" viewBox="0 0 16 16" fill="none" style=""><rect x=".5" y=".5" width="15" height="15" rx="2.500" stroke="#6F737A"/></svg></div><div class="t" style="left:77px">nativeTest</div></div><div class="row" style="top:200px"><div class="ic" style="left:54px;top:4px"><svg width="16" height="16" viewBox="0 0 16 16" fill="none" style=""><rect x=".5" y=".5" width="15" height="15" rx="2.500" stroke="#6F737A"/></svg></div><div class="t" style="left:77px">prod</div></div><div class="row" style="top:224px"><div class="ic" style="left:54px;top:4px"><svg width="16" height="16" viewBox="0 0 16 16" fill="none" style=""><rect x=".5" y=".5" width="15" height="15" rx="2.500" stroke="#6F737A"/></svg></div><div class="t" style="left:77px">test</div></div><div class="row" style="top:248px"><div class="ic" style="left:54px;top:4px"><svg width="16" height="16" viewBox="0 0 16 16" fill="none" style=""><rect x=".5" y=".5" width="15" height="15" rx="2.500" stroke="#6F737A"/></svg></div><div class="t" style="left:77px">uat</div></div><div class="row" style="top:272px"><div class="ic" style="left:12px;top:4px"><svg width="16" height="16" viewBox="0 0 16 16" fill="none" style=""><path d="M4.400 6.400l3.600 3.600 3.600-3.600" stroke="#9DA0A8" stroke-width="1.200" stroke-linecap="round" stroke-linejoin="round"/></svg></div><div class="ic" style="left:34px;top:4px"><div class="t" style="left:-1px;top:-5px;font-size:19px;font-style:italic;color:#548AF7;line-height:22px;height:22px;letter-spacing:-.5px">m</div></div><div class="t" style="left:52px">xiaomayi</div></div><div class="row" style="top:296px"><div class="ic" style="left:31px;top:4px"><svg width="16" height="16" viewBox="0 0 16 16" fill="none" style=""><path d="M4.400 6.400l3.600 3.600 3.600-3.600" stroke="#9DA0A8" stroke-width="1.200" stroke-linecap="round" stroke-linejoin="round"/></svg></div><div class="ic" style="left:52px;top:4px"><svg width="16" height="16" viewBox="0 0 16 16" fill="none" style=""><path d="M8 13.500H2.600c-.6 0-1.100-.5-1.100-1.100V3.600c0-.6.5-1.100 1.100-1.100h3.100c.3 0 .6.100.8.400L8 4.500h5.400c.6 0 1.100.5 1.100 1.100V7.500" stroke="#CED0D6" fill="#43454A"/><path d="M11.12 9.45L11.31 8.47L12.69 8.47L12.88 9.45L13.77 9.96L14.72 9.64L15.40 10.83L14.65 11.48L14.65 12.52L15.40 13.17L14.72 14.36L13.77 14.04L12.88 14.55L12.69 15.53L11.31 15.53L11.12 14.55L10.23 14.04L9.28 14.36L8.60 13.17L9.35 12.52L9.35 11.48L8.60 10.83L9.28 9.64L10.23 9.96z" stroke="#548AF7" fill="#25324D" stroke-width=".9" stroke-linejoin="round"/><circle cx="12" cy="12" r="1.100" stroke="#548AF7" stroke-width=".9"/></svg></div><div class="t" style="left:71px">Lifecycle</div></div><div class="row" style="top:320px"><div class="ic" style="left:71px;top:4px"><svg width="16" height="16" viewBox="0 0 16 16" fill="none" style=""><path d="M6.31 3.08L6.72 1.42L9.28 1.42L9.69 3.08L11.41 4.08L13.06 3.60L14.33 5.82L13.10 7.01L13.10 8.99L14.33 10.18L13.06 12.40L11.41 11.92L9.69 12.92L9.28 14.58L6.72 14.58L6.31 12.92L4.59 11.92L2.94 12.40L1.67 10.18L2.90 8.99L2.90 7.01L1.67 5.82L2.94 3.60L4.59 4.08z" stroke="#CED0D6" stroke-linejoin="round"/><circle cx="8" cy="8" r="2" stroke="#CED0D6"/></svg></div><div class="t" style="left:90px">clean</div></div><div class="row" style="top:344px"><div class="ic" style="left:71px;top:4px"><svg width="16" height="16" viewBox="0 0 16 16" fill="none" style=""><path d="M6.31 3.08L6.72 1.42L9.28 1.42L9.69 3.08L11.41 4.08L13.06 3.60L14.33 5.82L13.10 7.01L13.10 8.99L14.33 10.18L13.06 12.40L11.41 11.92L9.69 12.92L9.28 14.58L6.72 14.58L6.31 12.92L4.59 11.92L2.94 12.40L1.67 10.18L2.90 8.99L2.90 7.01L1.67 5.82L2.94 3.60L4.59 4.08z" stroke="#CED0D6" stroke-linejoin="round"/><circle cx="8" cy="8" r="2" stroke="#CED0D6"/></svg></div><div class="t" style="left:90px">validate</div></div><div class="row" style="top:368px"><div class="ic" style="left:71px;top:4px"><svg width="16" height="16" viewBox="0 0 16 16" fill="none" style=""><path d="M6.31 3.08L6.72 1.42L9.28 1.42L9.69 3.08L11.41 4.08L13.06 3.60L14.33 5.82L13.10 7.01L13.10 8.99L14.33 10.18L13.06 12.40L11.41 11.92L9.69 12.92L9.28 14.58L6.72 14.58L6.31 12.92L4.59 11.92L2.94 12.40L1.67 10.18L2.90 8.99L2.90 7.01L1.67 5.82L2.94 3.60L4.59 4.08z" stroke="#CED0D6" stroke-linejoin="round"/><circle cx="8" cy="8" r="2" stroke="#CED0D6"/></svg></div><div class="t" style="left:90px">compile</div></div><div class="row" style="top:392px"><div class="ic" style="left:71px;top:4px"><svg width="16" height="16" viewBox="0 0 16 16" fill="none" style=""><path d="M6.31 3.08L6.72 1.42L9.28 1.42L9.69 3.08L11.41 4.08L13.06 3.60L14.33 5.82L13.10 7.01L13.10 8.99L14.33 10.18L13.06 12.40L11.41 11.92L9.69 12.92L9.28 14.58L6.72 14.58L6.31 12.92L4.59 11.92L2.94 12.40L1.67 10.18L2.90 8.99L2.90 7.01L1.67 5.82L2.94 3.60L4.59 4.08z" stroke="#CED0D6" stroke-linejoin="round"/><circle cx="8" cy="8" r="2" stroke="#CED0D6"/></svg></div><div class="t" style="left:90px">test</div></div><div class="row" style="top:416px"><div class="ic" style="left:71px;top:4px"><svg width="16" height="16" viewBox="0 0 16 16" fill="none" style=""><path d="M6.31 3.08L6.72 1.42L9.28 1.42L9.69 3.08L11.41 4.08L13.06 3.60L14.33 5.82L13.10 7.01L13.10 8.99L14.33 10.18L13.06 12.40L11.41 11.92L9.69 12.92L9.28 14.58L6.72 14.58L6.31 12.92L4.59 11.92L2.94 12.40L1.67 10.18L2.90 8.99L2.90 7.01L1.67 5.82L2.94 3.60L4.59 4.08z" stroke="#CED0D6" stroke-linejoin="round"/><circle cx="8" cy="8" r="2" stroke="#CED0D6"/></svg></div><div class="t" style="left:90px">package</div></div><div class="row" style="top:440px"><div class="ic" style="left:71px;top:4px"><svg width="16" height="16" viewBox="0 0 16 16" fill="none" style=""><path d="M6.31 3.08L6.72 1.42L9.28 1.42L9.69 3.08L11.41 4.08L13.06 3.60L14.33 5.82L13.10 7.01L13.10 8.99L14.33 10.18L13.06 12.40L11.41 11.92L9.69 12.92L9.28 14.58L6.72 14.58L6.31 12.92L4.59 11.92L2.94 12.40L1.67 10.18L2.90 8.99L2.90 7.01L1.67 5.82L2.94 3.60L4.59 4.08z" stroke="#CED0D6" stroke-linejoin="round"/><circle cx="8" cy="8" r="2" stroke="#CED0D6"/></svg></div><div class="t" style="left:90px">verify</div></div><div class="row" style="top:464px"><div class="ic" style="left:71px;top:4px"><svg width="16" height="16" viewBox="0 0 16 16" fill="none" style=""><path d="M6.31 3.08L6.72 1.42L9.28 1.42L9.69 3.08L11.41 4.08L13.06 3.60L14.33 5.82L13.10 7.01L13.10 8.99L14.33 10.18L13.06 12.40L11.41 11.92L9.69 12.92L9.28 14.58L6.72 14.58L6.31 12.92L4.59 11.92L2.94 12.40L1.67 10.18L2.90 8.99L2.90 7.01L1.67 5.82L2.94 3.60L4.59 4.08z" stroke="#CED0D6" stroke-linejoin="round"/><circle cx="8" cy="8" r="2" stroke="#CED0D6"/></svg></div><div class="t" style="left:90px">install</div></div><div class="row" style="top:488px"><div class="ic" style="left:71px;top:4px"><svg width="16" height="16" viewBox="0 0 16 16" fill="none" style=""><path d="M6.31 3.08L6.72 1.42L9.28 1.42L9.69 3.08L11.41 4.08L13.06 3.60L14.33 5.82L13.10 7.01L13.10 8.99L14.33 10.18L13.06 12.40L11.41 11.92L9.69 12.92L9.28 14.58L6.72 14.58L6.31 12.92L4.59 11.92L2.94 12.40L1.67 10.18L2.90 8.99L2.90 7.01L1.67 5.82L2.94 3.60L4.59 4.08z" stroke="#CED0D6" stroke-linejoin="round"/><circle cx="8" cy="8" r="2" stroke="#CED0D6"/></svg></div><div class="t" style="left:90px">site</div></div><div class="row" style="top:512px"><div class="ic" style="left:71px;top:4px"><svg width="16" height="16" viewBox="0 0 16 16" fill="none" style=""><path d="M6.31 3.08L6.72 1.42L9.28 1.42L9.69 3.08L11.41 4.08L13.06 3.60L14.33 5.82L13.10 7.01L13.10 8.99L14.33 10.18L13.06 12.40L11.41 11.92L9.69 12.92L9.28 14.58L6.72 14.58L6.31 12.92L4.59 11.92L2.94 12.40L1.67 10.18L2.90 8.99L2.90 7.01L1.67 5.82L2.94 3.60L4.59 4.08z" stroke="#CED0D6" stroke-linejoin="round"/><circle cx="8" cy="8" r="2" stroke="#CED0D6"/></svg></div><div class="t" style="left:90px">deploy</div></div><div class="row" style="top:536px"><div class="ic" style="left:31px;top:4px"><svg width="16" height="16" viewBox="0 0 16 16" fill="none" style=""><path d="M6.400 4.400l3.600 3.600-3.600 3.600" stroke="#9DA0A8" stroke-width="1.200" stroke-linecap="round" stroke-linejoin="round"/></svg></div><div class="ic" style="left:52px;top:4px"><svg width="16" height="16" viewBox="0 0 16 16" fill="none" style=""><path d="M8 13.500H2.600c-.6 0-1.100-.5-1.100-1.100V3.600c0-.6.5-1.100 1.100-1.100h3.100c.3 0 .6.100.8.400L8 4.500h5.400c.6 0 1.100.5 1.100 1.100V7.500" stroke="#CED0D6" fill="#43454A"/><path d="M11.12 9.45L11.31 8.47L12.69 8.47L12.88 9.45L13.77 9.96L14.72 9.64L15.40 10.83L14.65 11.48L14.65 12.52L15.40 13.17L14.72 14.36L13.77 14.04L12.88 14.55L12.69 15.53L11.31 15.53L11.12 14.55L10.23 14.04L9.28 14.36L8.60 13.17L9.35 12.52L9.35 11.48L8.60 10.83L9.28 9.64L10.23 9.96z" stroke="#548AF7" fill="#25324D" stroke-width=".9" stroke-linejoin="round"/><circle cx="12" cy="12" r="1.100" stroke="#548AF7" stroke-width=".9"/></svg></div><div class="t" style="left:71px">Plugins</div></div><div class="row" style="top:560px"><div class="ic" style="left:31px;top:4px"><svg width="16" height="16" viewBox="0 0 16 16" fill="none" style=""><path d="M6.400 4.400l3.600 3.600-3.600 3.600" stroke="#9DA0A8" stroke-width="1.200" stroke-linecap="round" stroke-linejoin="round"/></svg></div><div class="ic" style="left:52px;top:4px"><svg width="16" height="16" viewBox="0 0 16 16" fill="none" style=""><path d="M8 13.500H2.600c-.6 0-1.100-.5-1.100-1.100V3.600c0-.6.5-1.100 1.100-1.100h3.100c.3 0 .6.100.8.400L8 4.500h5.400c.6 0 1.100.5 1.100 1.100V9.500" stroke="#CED0D6" fill="#43454A"/><path d="M9.500 12.500l2 2 4-4" stroke="#548AF7" stroke-width="1.200"/></svg></div><div class="t" style="left:72px">Repositories</div></div><div class="abs" style="left:253px;top:77px;width:8px;height:418px;background:#4A4C50"></div></div><div class="line" style="left:1879px;top:41px;width:1px;height:961px"></div><div id="rstripe"><svg width="23" height="23" viewBox="0 0 20 20" fill="none" style="left:8.500px;top:8.500px"><path d="M10 2.500c-3 0-5 2.200-5 5v3.500l-1.700 3.200c-.2.400.1.800.5.800h12.400c.4 0 .7-.4.500-.8L15 11V7.500c0-2.800-2-5-5-5zM8 17.500c.4.700 1.100 1.100 2 1.100s1.600-.4 2-1.100" stroke="#CED0D6" stroke-width="1.400" stroke-linejoin="round" stroke-linecap="round"/></svg><div class="abs" style="left:23px;top:10px;width:8px;height:8px;border-radius:50%;background:#DB5C5C;border:1px solid #2B2D30"></div><svg width="20" height="20" viewBox="0 0 20 20" fill="none" style="left:10px;top:50px"><path d="M10.500 10.200c0-1-1.800-1.200-2.300 0-.6 1.500.8 3 2.800 2.800 2.200-.2 3.500-2.200 3-4.300C13.400 6 10.800 4.800 8.200 5.500 5 6.300 3.300 9.300 4.200 12.300 5.200 15.500 8.500 17 12 16.300c2-.4 3.500-1.300 4.800-2.800" stroke="#CED0D6" stroke-width="1.400" stroke-linecap="round"/><path d="M3 6.500C4.500 4 7.500 2.500 11 3c3.800.5 6.300 3.500 6 7" stroke="#CED0D6" stroke-width="1.400" stroke-linecap="round"/></svg><svg width="20" height="20" viewBox="0 0 20 20" fill="none" style="left:10px;top:90px"><ellipse cx="10" cy="5" rx="7" ry="2.800" stroke="#CED0D6" stroke-width="1.400"/><path d="M3 5v10c0 1.500 3.100 2.800 7 2.800s7-1.300 7-2.800V5M3 8.300c0 1.500 3.100 2.800 7 2.800s7-1.300 7-2.800M3 11.700c0 1.500 3.100 2.800 7 2.800s7-1.300 7-2.800" stroke="#CED0D6" stroke-width="1.400"/></svg><div class="abs" style="left:5px;top:125px;width:30px;height:30px;border-radius:6px;background:#47494E"></div><div class="t" style="left:10px;top:124px;font-size:22.500px;font-style:italic;color:#CED0D6;line-height:30px;height:30px;letter-spacing:-1px">m</div><svg width="20" height="20" viewBox="0 0 20 20" fill="none" style="left:10px;top:170px"><path d="M6.500 6.500V4c0-1.500 1-2.500 3.500-2.500s3.500 1 3.500 2.500v3c0 1.500-1 2.500-2.500 2.500H9c-1.500 0-2.500 1-2.500 2.500v1.500H4c-1.500 0-2.500-1.200-2.500-3.500S2.500 6.500 4 6.500h6" stroke="#CED0D6" stroke-width="1.400" stroke-linecap="round" stroke-linejoin="round"/><path d="M13.500 13.500V16c0 1.500-1 2.500-3.500 2.500S6.500 17.500 6.500 16v-2M13.500 6.500H16c1.500 0 2.500 1.200 2.500 3.500s-1 3.500-2.500 3.500h-6" stroke="#CED0D6" stroke-width="1.400" stroke-linecap="round" stroke-linejoin="round"/><circle cx="8.400" cy="4.200" r=".9" fill="#CED0D6"/><circle cx="11.600" cy="15.800" r=".9" fill="#CED0D6"/></svg><svg width="20" height="21" viewBox="0 0 20 21" fill="none" style="left:10px;top:209px"><path d="M7.500 1.200h5.500l1.200 2.300h3.300l2 3.500-1.700 3 1.700 3-2.800 4.800h-3.200l-1.300 2.300H6.800l-1.600-2.800 1.500-2.500H3.200L.5 10l1.700-3L.8 4.500z" fill="#B4B6BC"/><path d="M5.500 5.500l5 9.500M7 5h9M16.500 8.500l-4.500 8M4.500 9.500l2.500 5" stroke="#2B2D30" stroke-width="1.800"/></svg><svg width="20" height="20" viewBox="0 0 20 20" fill="none" style="left:10px;top:250px"><path d="M2.800 9.500c0-2.800 2.200-4.500 5-4.500 3.200 0 5.200 2 6 4 .8-2.300 2.500-3.800 5.200-4-.3 2.500-1.700 4.300-4.200 5 .2 3.500-2.500 6-6 6-3.500 0-6-3-6-6.500z" fill="#A8AAB0"/><path d="M4.500 7.500c2 .5 4 2.500 5 6.500M7 6c3 1.500 5 4 5.500 7.500" stroke="#2B2D30" stroke-width="1.400" fill="none"/></svg><div class="abs" style="left:8px;top:285px;width:24px;height:1px;background:#43454A"></div><svg width="20" height="20" viewBox="0 0 20 20" fill="none" style="left:10px;top:301px"><path d="M4 1.500h12M3.500 4h13" stroke="#CED0D6" stroke-width="1.400" stroke-linecap="round"/><rect x="2.500" y="4" width="15" height="14" rx="1.800" stroke="#CED0D6" stroke-width="1.400"/><path d="M7.500 14.500l2.500-6.500 2.500 6.500M8.300 12.500h3.400" stroke="#CED0D6" stroke-width="1.100" stroke-linecap="round" stroke-linejoin="round"/></svg><svg width="20" height="20" viewBox="0 0 20 20" fill="none" style="left:10px;top:341px"><rect x="2.500" y="2.500" width="6" height="6" rx="1.300" stroke="#CED0D6" stroke-width="1.400"/><rect x="2.500" y="11.500" width="6" height="6" rx="1.300" stroke="#CED0D6" stroke-width="1.400"/><rect x="11.500" y="11.500" width="6" height="6" rx="1.300" stroke="#CED0D6" stroke-width="1.400"/></svg><svg width="20" height="20" viewBox="0 0 20 20" fill="none" style="left:10px;top:891px"><defs><radialGradient id="bg1" cx=".5" cy=".45" r=".6"><stop offset="0" stop-color="#3B2B2B"/><stop offset="1" stop-color="#0C0A0A"/></radialGradient></defs><path d="M7 8.500L1.500 14.200 8 15.500z" fill="#0B0909"/><circle cx="11" cy="11.200" r="5.900" fill="url(#bg1)"/><path d="M16 8l3 .6-2.400 1.200z" fill="#0B0909"/><path d="M3.800 3l2.800 1.800c3-.3 6.800.7 10.300 3l.8 1.700-1.500.2c-3.600-1.600-7.200-2.700-10-2.600L3.400 5.200l1.600-.6z" fill="#17A3A3"/><circle cx="15.600" cy="7.800" r=".8" fill="#CFEDEE"/></svg><svg width="20" height="20" viewBox="0 0 20 20" fill="none" style="left:10px;top:931px"><defs><radialGradient id="bg2" cx=".5" cy=".45" r=".6"><stop offset="0" stop-color="#3B2B2B"/><stop offset="1" stop-color="#0C0A0A"/></radialGradient></defs><path d="M2 14.500c1.500 3 6 4.500 10.500 3 4-1.400 6.300-5 5.800-8.500" stroke="#A9ABB1" stroke-width=".9" fill="none"/><path d="M7 8.500L1.500 14.200 8 15.500z" fill="#0B0909"/><circle cx="11" cy="11.200" r="5.900" fill="url(#bg2)"/><path d="M3.500 2.500l3.100 2.300c3-.3 6.800.7 10.300 3l.8 1.900-1.500.2c-3.600-1.600-7.200-2.900-10-2.800L3.200 5.200l1.700-.8z" fill="#E0141F"/><path d="M2.500 2.200l2 1.600M5 1.500l1.200 2" stroke="#E87078" stroke-width=".9"/></svg></div><div class="line" style="left:41px;top:632px;width:1838px;height:1px"></div><div id="debug"><div class="t b" style="left:12px;top:10px">Debug</div><div class="ic" style="left:81px;top:12px"><svg width="16" height="16" viewBox="0 0 16 16" fill="none" style=""><rect x="1.500" y="2.500" width="13" height="11" rx="1.500" stroke="#375FAD" fill="#1F2538"/><path d="M3.500 5h1M6 5h1" stroke="#375FAD"/></svg></div><div class="t" style="left:101px;top:10px">CodeGenerator</div><svg width="8" height="8" viewBox="0 0 8 8" fill="none" style="left:203px;top:17px"><path d="M.5.500l7 7M7.500.500l-7 7" stroke="#868A91" stroke-linecap="round"/></svg><div class="line" style="left:0;top:40px;width:1838px;height:1px"></div><div class="abs" style="left:69px;top:38px;width:153px;height:3px;border-radius:1.500px;background:#3574F0"></div><svg width="4" height="14" viewBox="0 0 4 14" fill="none" style="left:1789px;top:13px"><circle cx="2" cy="2" r="1.1" fill="#CED0D6"/><circle cx="2" cy="7" r="1.1" fill="#CED0D6"/><circle cx="2" cy="12" r="1.1" fill="#CED0D6"/></svg><div class="abs" style="left:1811px;top:19.300px;width:13px;height:1.400px;background:#B4B6BC"></div><svg width="17" height="17" viewBox="0 0 17 17" fill="none" style="left:12px;top:50px"><path d="M12.300 3.800A5.700 5.700 0 1 0 8 13.700" stroke="#CED0D6" stroke-linecap="round"/><path d="M13 .8v3.400H9.600" stroke="#CED0D6" stroke-linecap="round" stroke-linejoin="round"/><path d="M12.300 9.600c1.400 0 2.300 1.100 2.300 2.700s-.9 3-2.300 3-2.300-1.400-2.300-3 .9-2.700 2.300-2.700z" stroke="#57965C" fill="#253627"/><path d="M10.800 9.300l-.9-.9M13.800 9.300l.9-.9M10 12H8.500M14.600 12h1.500M10.300 14.300l-1.300 1M14.300 14.300l1.300 1" stroke="#57965C" stroke-linecap="round"/></svg><div class="abs" style="left:40px;top:52px;width:12px;height:12px;border-radius:2px;background:#5A5D63"></div><div class="abs" style="left:62px;top:48px;width:1px;height:20px;background:#43454A"></div><svg width="16" height="16" viewBox="0 0 16 16" fill="none" style="left:71px;top:50px"><path d="M1.500 2.500h3.500v11H1.500zM6.500 2l9 6-9 6z" fill="#5A5D63"/></svg><svg width="16" height="16" viewBox="0 0 16 16" fill="none" style="left:97px;top:50px"><rect x="3.500" y="2.500" width="2.500" height="11" rx=".5" stroke="#5A5D63"/><rect x="10" y="2.500" width="2.500" height="11" rx=".5" stroke="#5A5D63"/></svg><svg width="16" height="16" viewBox="0 0 16 16" fill="none" style="left:123px;top:50px"><path d="M2.500 10l5.500-6 5.500 6M9 6.500l4.500 3.500M13.500 10V5.500M2 13.500h12" stroke="#5A5D63" stroke-linecap="round" stroke-linejoin="round" fill="none"/></svg><svg width="16" height="16" viewBox="0 0 16 16" fill="none" style="left:149px;top:50px"><path d="M8 2v8.500M4.500 7.500L8 11l3.500-3.500M2.500 14h11" stroke="#5A5D63" stroke-linecap="round" stroke-linejoin="round"/></svg><svg width="16" height="16" viewBox="0 0 16 16" fill="none" style="left:175px;top:50px"><path d="M8 11V2.500M4.500 6L8 2.500 11.500 6M2.500 14h11" stroke="#5A5D63" stroke-linecap="round" stroke-linejoin="round"/></svg><div class="abs" style="left:199px;top:48px;width:1px;height:20px;background:#43454A"></div><svg width="16" height="16" viewBox="0 0 16 16" fill="none" style="left:208px;top:50px"><circle cx="10.500" cy="5.500" r="4.500" stroke="#DB5C5C" fill="#3A2527"/><circle cx="5.500" cy="10.500" r="4.500" stroke="#DB5C5C" fill="#5A2F30"/></svg><svg width="16" height="16" viewBox="0 0 16 16" fill="none" style="left:234px;top:50px"><circle cx="8" cy="8" r="5.500" stroke="#DB5C5C"/><path d="M2 14L14 2" stroke="#1E1F22" stroke-width="3"/><path d="M2 14L14 2" stroke="#CED0D6" stroke-linecap="round"/></svg><svg width="4" height="13.0" viewBox="0 0 4 13.0" fill="none" style="left:266px;top:51.5px"><circle cx="2" cy="2.0" r="1.1" fill="#CED0D6"/><circle cx="2" cy="6.5" r="1.1" fill="#CED0D6"/><circle cx="2" cy="11.0" r="1.1" fill="#CED0D6"/></svg><div class="t" style="left:306px;top:48px;letter-spacing:.12px">Threads &amp; Variables</div><div class="t" style="left:450px;top:48px">Console</div><div class="abs" style="left:437px;top:73.700px;width:73px;height:2.300px;background:#3574F0"></div><svg width="14" height="14" viewBox="0 0 14 14" fill="none" style="left:1820px;top:51px"><rect x="1.500" y="1.500" width="11" height="11" rx="1.500" stroke="#CED0D6"/><path d="M6.500 1.500v11M6.500 6.500h6" stroke="#CED0D6"/></svg><div class="abs" style="left:38px;top:75px;width:1800px;height:294px;background:#1E1F22"></div><svg width="16" height="16" viewBox="0 0 16 16" fill="none" style="left:11px;top:86px"><path d="M8 13.500V2.500M3.500 7L8 2.500 12.500 7" stroke="#CED0D6" stroke-linecap="round" stroke-linejoin="round"/></svg><svg width="16" height="16" viewBox="0 0 16 16" fill="none" style="left:11px;top:112px"><path d="M8 2.500v11M3.500 9L8 13.500 12.500 9" stroke="#CED0D6" stroke-linecap="round" stroke-linejoin="round"/></svg><svg width="16" height="16" viewBox="0 0 16 16" fill="none" style="left:11px;top:138px"><path d="M1.500 3h13M1.500 7.500h10.500a2.300 2.300 0 0 1 0 4.600H9M1.500 12h4M10.500 10L8.500 12l2 2" stroke="#CED0D6" stroke-linecap="round" stroke-linejoin="round"/></svg><div class="abs" style="left:8px;top:161px;width:22px;height:22px;border-radius:4px;background:#43454A"></div><svg width="16" height="16" viewBox="0 0 16 16" fill="none" style="left:11px;top:164px"><path d="M1.500 4h6M1.500 8.500h6M1.500 13.500h13M11.500 2.500v7.500M8.500 7l3 3 3-3" stroke="#CED0D6" stroke-linecap="round" stroke-linejoin="round"/></svg><svg width="16" height="16" viewBox="0 0 16 16" fill="none" style="left:11px;top:190px"><path d="M4 6V2.500h8V6M4 11.500H2.500c-.6 0-1-.4-1-1V7c0-.6.400-1 1-1h11c.6 0 1 .4 1 1v3.500c0 .6-.4 1-1 1H12M4 9.500h8v4H4z" stroke="#CED0D6" stroke-linecap="round" stroke-linejoin="round"/></svg><svg width="16" height="16" viewBox="0 0 16 16" fill="none" style="left:11px;top:216px"><path d="M2 4.500h12M6 4.500V3c0-.6.400-1 1-1h2c.6 0 1 .4 1 1v1.500M3.500 4.500V13c0 .6.400 1 1 1h7c.6 0 1-.4 1-1V4.500M6.500 7.500v4M9.500 7.500v4" stroke="#CED0D6" stroke-linecap="round" stroke-linejoin="round"/></svg><div class="abs" style="left:50px;top:76px;width:376px;height:22px;background:#393B40"></div><div class="con" style="left:50px;top:76px;color:#7A7E85">"C:\Program Files\Java\jdk-17\bin\java.exe" ...</div><div class="con" style="left:50px;top:98px;">Connected to the target VM, address: '127.0.0.1:53965', transport: 'socket'</div><div class="con" style="left:50px;top:120px;"><span class="cc">请输入表名，多个英文逗号分割：</span></div><div class="con" style="left:50px;top:142px;color:#6AAB73;font-style:italic">sys_example</div><div class="con" style="left:50px;top:164px;">09:53:40.379 [main] WARN com.baomidou.mybatisplus.generator.query.DefaultQuery -- <span class="cc">当前表</span>[sys_example]<span class="cc">的主键为自增主键，会导致全局主键的</span>ID<span class="cc">类型设置失效！</span></div><div class="abs" style="left:578px;top:181.500px;width:96px;height:2px;background:repeating-linear-gradient(90deg,#A0A3AA 0 1.500px,transparent 1.500px 3px)"></div><div class="con" style="left:50px;top:186px;">Disconnected from the target VM, address: '127.0.0.1:53965', transport: 'socket'</div><div class="con" style="left:50px;top:230px;">Process finished with exit code 0</div></div><svg width="1920" height="1032" viewBox="0 0 1920 1032" style="left:0;top:0;pointer-events:none"><path d="M378.500 757L204.800 775.400 204.200 770.200 185.200 784.200 207 792.500 206.300 786.500z" fill="#F5515F"/><path d="M146.600 799L188.600 855.300 190.300 852.900 191.900 863 182.900 858.100 185.800 857.300z" fill="#F5515F"/></svg><div class="abs" style="left:230px;top:897px;font-family:'Noto Sans CJK SC',sans-serif;font-size:22px;line-height:32px;color:#F5515F;white-space:pre">即表示生成完毕</div><div id="status"><div class="abs" style="left:14px;top:11px;width:8px;height:8px;border:1.500px solid #548AF7;border-radius:2px"></div><div class="sb" style="left:26px;">XiaoMaYi-EleVue</div><svg width="6" height="10" viewBox="0 0 6 10" fill="none" style="left:134px;top:10px"><path d="M1 1l3.500 4L1 9" stroke="#A3A6AD" stroke-width="1.300" stroke-linecap="round" stroke-linejoin="round"/></svg><div class="abs" style="left:149px;top:11px;width:8px;height:8px;border:1.500px solid #548AF7;border-radius:2px"></div><div class="sb" style="left:161px;">xiaomayi-services</div><svg width="6" height="10" viewBox="0 0 6 10" fill="none" style="left:272px;top:10px"><path d="M1 1l3.500 4L1 9" stroke="#A3A6AD" stroke-width="1.300" stroke-linecap="round" stroke-linejoin="round"/></svg><div class="abs" style="left:287px;top:11px;width:8px;height:8px;border:1.500px solid #548AF7;border-radius:2px"></div><div class="sb" style="left:299px;">xiaomayi-generator</div><svg width="6" height="10" viewBox="0 0 6 10" fill="none" style="left:422px;top:10px"><path d="M1 1l3.500 4L1 9" stroke="#A3A6AD" stroke-width="1.300" stroke-linecap="round" stroke-linejoin="round"/></svg><div class="sb" style="left:437px;">src</div><svg width="6" height="10" viewBox="0 0 6 10" fill="none" style="left:464px;top:10px"><path d="M1 1l3.500 4L1 9" stroke="#A3A6AD" stroke-width="1.300" stroke-linecap="round" stroke-linejoin="round"/></svg><div class="sb" style="left:478px;">main</div><svg width="6" height="10" viewBox="0 0 6 10" fill="none" style="left:515px;top:10px"><path d="M1 1l3.500 4L1 9" stroke="#A3A6AD" stroke-width="1.300" stroke-linecap="round" stroke-linejoin="round"/></svg><div class="sb" style="left:530px;">java</div><svg width="6" height="10" viewBox="0 0 6 10" fill="none" style="left:562px;top:10px"><path d="M1 1l3.500 4L1 9" stroke="#A3A6AD" stroke-width="1.300" stroke-linecap="round" stroke-linejoin="round"/></svg><div class="sb" style="left:577px;">com</div><svg width="6" height="10" viewBox="0 0 6 10" fill="none" style="left:611px;top:10px"><path d="M1 1l3.500 4L1 9" stroke="#A3A6AD" stroke-width="1.300" stroke-linecap="round" stroke-linejoin="round"/></svg><div class="sb" style="left:626px;">xiaomayi</div><svg width="6" height="10" viewBox="0 0 6 10" fill="none" style="left:686px;top:10px"><path d="M1 1l3.500 4L1 9" stroke="#A3A6AD" stroke-width="1.300" stroke-linecap="round" stroke-linejoin="round"/></svg><div class="sb" style="left:701px;">generator</div><svg width="6" height="10" viewBox="0 0 6 10" fill="none" style="left:768px;top:10px"><path d="M1 1l3.500 4L1 9" stroke="#A3A6AD" stroke-width="1.300" stroke-linecap="round" stroke-linejoin="round"/></svg><div class="sb" style="left:783px;">utils</div><svg width="6" height="10" viewBox="0 0 6 10" fill="none" style="left:815px;top:10px"><path d="M1 1l3.500 4L1 9" stroke="#A3A6AD" stroke-width="1.300" stroke-linecap="round" stroke-linejoin="round"/></svg><div class="ic" style="left:830px;top:7px"><svg width="16" height="16" viewBox="0 0 16 16" fill="none" style=""><path d="M8 1.500A6.500 6.500 0 1 0 14.500 8" stroke="#548AF7" fill="#25324D"/><path d="M10.300 10.100c-.5.600-1.200 1-2.100 1-1.600 0-2.800-1.300-2.800-3.100s1.200-3.100 2.800-3.100" stroke="#548AF7" stroke-width="1.100"/><path d="M9 .600v7.400l6.300-3.700z" fill="#253627" stroke="#57965C" stroke-linejoin="round"/></svg></div><div class="sb" style="left:850px;">CodeGenerator</div><svg width="6" height="10" viewBox="0 0 6 10" fill="none" style="left:949px;top:10px"><path d="M1 1l3.500 4L1 9" stroke="#A3A6AD" stroke-width="1.300" stroke-linecap="round" stroke-linejoin="round"/></svg><svg width="17" height="17" viewBox="0 0 17 17" fill="none" style="left:963px;top:7px"><circle cx="8.500" cy="7.500" r="6.500" stroke="#DB5C5C" fill="#402929"/><path d="M5.500 10.500V6c0-1 2.800-1 2.800 0v4.500M8.300 6c0-1 2.800-1 2.800 0v4.500" stroke="#DB5C5C" stroke-width="1.100" stroke-linecap="round"/><path d="M3.500 10.500l3 3-3 3-3-3z" fill="#CED0D6" stroke="#2B2D30" stroke-width=".8"/></svg><div class="sb" style="left:984px;">Generation</div><svg width="6" height="10" viewBox="0 0 6 10" fill="none" style="left:1057px;top:10px"><path d="M1 1l3.500 4L1 9" stroke="#A3A6AD" stroke-width="1.300" stroke-linecap="round" stroke-linejoin="round"/></svg><svg width="16" height="16" viewBox="0 0 16 16" fill="none" style="left:1072px;top:7px"><circle cx="8" cy="8" r="6.500" stroke="#DB5C5C" fill="#402929"/><path d="M5.500 4.500h1c.5 0 .8.300 1 .8l2.500 6.200M7.800 7l-2.300 4.500" stroke="#DB5C5C" stroke-width="1.100" stroke-linecap="round"/></svg><div class="sb" style="left:1092px;">Lambda</div><div class="sb" style="left:1614px;letter-spacing:-.4px">166:1</div><svg width="16" height="17" viewBox="0 0 20 21" fill="none" style="left:1661px;top:7px"><path d="M7.500 1.200h5.500l1.200 2.300h3.300l2 3.500-1.700 3 1.700 3-2.800 4.800h-3.200l-1.300 2.300H6.800l-1.600-2.800 1.500-2.500H3.200L.5 10l1.700-3L.8 4.500z" fill="#6246EA"/><path d="M5.500 5.500l5 9.500M7 5h9M16.500 8.500l-4.500 8M4.500 9.500l2.500 5" stroke="#EDE8FF" stroke-width="1.700"/></svg><div class="abs" style="left:1694px;top:8px;width:6.500px;height:6.500px;background:#F25022"></div><div class="abs" style="left:1701.500px;top:8px;width:6.500px;height:6.500px;background:#7FBA00"></div><div class="abs" style="left:1694px;top:15.500px;width:6.500px;height:6.500px;background:#00A4EF"></div><div class="abs" style="left:1701.500px;top:15.500px;width:6.500px;height:6.500px;background:#FFB900"></div><div class="sb" style="left:1725px;letter-spacing:-1.2px">CRLF</div><div class="sb" style="left:1769px;letter-spacing:-.6px">UTF-8</div><div class="sb" style="left:1819px;">4 spaces</div><svg width="16" height="16" viewBox="0 0 16 16" fill="none" style="left:1887.500px;top:7px"><rect x="1.500" y="7" width="9" height="7" rx="1.500" stroke="#CED0D6"/><path d="M8.500 7V4.500a2.500 2.500 0 0 1 5 0V6" stroke="#CED0D6" stroke-linecap="round"/><circle cx="6" cy="10.500" r=".9" fill="#CED0D6"/></svg></div></body></html>
